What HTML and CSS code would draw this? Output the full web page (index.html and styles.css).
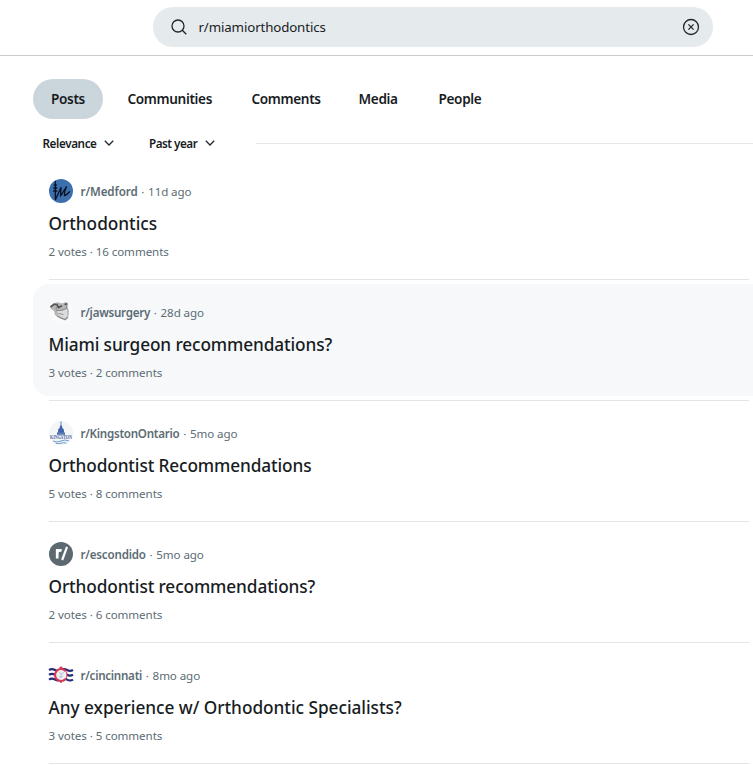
FILE: index.html
```html
<!DOCTYPE html>
<html lang="en">
<head>
<meta charset="utf-8">
<title>Search results</title>
<link rel="stylesheet" href="styles.css">
</head>
<body>
<header class="topbar">
  <div class="search">
    <svg class="search-icon" width="16" height="16" viewBox="0 0 16 16"><circle cx="7" cy="7" r="6"/><path d="M11.3 11.3 15.3 15.3"/></svg>
    <span class="query">r/miamiorthodontics</span>
    <svg class="clear-icon" width="18" height="18" viewBox="0 0 18 18"><circle cx="9" cy="9" r="7.5"/><path d="M6.4 6.4l5.2 5.2M11.6 6.4l-5.2 5.2"/></svg>
  </div>
</header>
<main>
  <nav class="tabs">
    <a class="tab active"><span class="w-posts">Posts</span></a>
    <a class="tab"><span class="w-communities">Communities</span></a>
    <a class="tab"><span class="w-comments">Comments</span></a>
    <a class="tab"><span class="w-media">Media</span></a>
    <a class="tab"><span class="w-people">People</span></a>
  </nav>
  <div class="filters">
    <button class="filter relevance"><span>Relevance</span><svg width="10" height="6" viewBox="0 0 10 6"><path d="M.8 .8 5 5 9.2 .8"/></svg></button>
    <button class="filter period"><span>Past year</span><svg width="10" height="6" viewBox="0 0 10 6"><path d="M.8 .8 5 5 9.2 .8"/></svg></button>
    <div class="rule"></div>
  </div>
  <section class="results">
    <article class="post">
      <div class="meta">
        <svg class="avatar" viewBox="0 0 24 24"><circle cx="12" cy="12" r="12" fill="#3b6fae"/><g fill="none" stroke="#0b1020" stroke-linecap="round" stroke-linejoin="round"><path d="M6.3 2.5v17.5M5.3 6h2M4.8 9h3M4.6 12h3.2" stroke-width="1.3"/><path d="M6.5 20.5 12 8.5 11.6 17 17.4 7.8Q15 13 15.4 16.5 17 16.5 20.5 12.8" stroke-width="1.3"/></g></svg>
        <span class="sub s1">r/Medford</span><span class="dot">·</span><span class="age">11d ago</span>
      </div>
      <h2 class="t1">Orthodontics</h2>
      <p class="stats">2 votes · 16 comments</p>
    </article>
    <hr>
    <article class="post hovered">
      <div class="meta">
        <svg class="avatar" viewBox="0 0 24 24"><circle cx="12" cy="12" r="12" fill="#fafafa"/><path d="M1 6.5 5 3 9 2.2 13 3.5 17 2 19 3.5 18.5 7 20 11 19.3 17.5 16.5 20.5 11 18.5 6 15 5 11 2 9Z" fill="#b5b5b5"/><path d="M8 10.5 14 10.5 18 8.5 18.5 16 15.5 18.5 9.5 15.5Z" fill="#dcdcdc"/><path d="M1.5 7 5 4.3 8 4.5 9.5 7.5 13 5.8M15.5 4.5 18.3 3.8" fill="none" stroke="#555" stroke-width="1.7"/><path d="M7.5 6.5 7 9.5M17.5 5 17.8 8.5 12 10.5 7 10.5M8 16 16 19.7 19 17.5M9.5 13.5 14.5 14.5" fill="none" stroke="#858585" stroke-width=".9"/></svg>
        <span class="sub s2">r/jawsurgery</span><span class="dot">·</span><span class="age">28d ago</span>
      </div>
      <h2 class="t2">Miami surgeon recommendations?</h2>
      <p class="stats">3 votes · 2 comments</p>
    </article>
    <hr>
    <article class="post">
      <div class="meta">
        <svg class="avatar" viewBox="0 0 24 24"><circle cx="12" cy="12" r="12" fill="#f4f5f7"/><path d="M11.6 .5h.8v3.8l.8 1v1.5q1.8 1 1.8 3v1.7h1v2.2H8v-2.2h1V9.8q0-2 1.8-3V5.3l.8-1Z" fill="#3f65aa"/><path d="M10 11.5v2M12 11.5v2M14 11.5v2" stroke="#a9bbdc" stroke-width=".6"/><text class="crest" x="1" y="18.4" textLength="22" lengthAdjust="spacingAndGlyphs">KINGSTON</text><path d="M4 20q4 2 8 0t8 0M6.5 22.2q2.8 1 5.5 0t5.5 0" fill="none" stroke="#6b9bcf"/></svg>
        <span class="sub s3">r/KingstonOntario</span><span class="dot">·</span><span class="age">5mo ago</span>
      </div>
      <h2 class="t3">Orthodontist Recommendations</h2>
      <p class="stats">5 votes · 8 comments</p>
    </article>
    <hr>
    <article class="post">
      <div class="meta">
        <svg class="avatar" viewBox="0 0 24 24"><circle cx="12" cy="12" r="12" fill="#5c6970"/><path d="M8.2 16.5V7M8.2 10.8q.3-2.8 4.4-2.4" fill="none" stroke="#fff" stroke-width="2.7"/><path d="M13.2 18 18 4.8" stroke="#fff" stroke-width="2.2"/></svg>
        <span class="sub s4">r/escondido</span><span class="dot">·</span><span class="age">5mo ago</span>
      </div>
      <h2 class="t4">Orthodontist recommendations?</h2>
      <p class="stats">2 votes · 6 comments</p>
    </article>
    <hr>
    <article class="post">
      <div class="meta">
        <svg class="avatar" viewBox="0 0 24 24"><path d="M0 7q3-1.8 6 0t6 0 6 0 6 0M0 11.8q3-1.8 6 0t6 0 6 0 6 0M0 16.6q3-1.8 6 0t6 0 6 0 6 0" fill="none" stroke="#282c78" stroke-width="2.2"/><circle cx="12" cy="12" r="6" fill="#eef0f6"/><path d="M16.5 8A6 6 0 1 0 16.5 16" fill="none" stroke="#d83a50" stroke-width="2.2"/><path d="M16.5 8a6 6 0 0 1 0 8" fill="none" stroke="#d83a50" stroke-width="1"/><path d="M12 3.6v2.5M10.3 5h3.4M11 18.9h2" stroke="#d83a50" stroke-width="1.6"/><path d="M10 9.2 12 11l3-1.5M12 11v4M9.8 13.5l2.2 1 2-2" fill="none" stroke="#a9b2ca" stroke-width=".8"/></svg>
        <span class="sub s5">r/cincinnati</span><span class="dot">·</span><span class="age">8mo ago</span>
      </div>
      <h2 class="t5">Any experience w/ Orthodontic Specialists?</h2>
      <p class="stats">3 votes · 5 comments</p>
    </article>
    <hr>
  </section>
</main>
</body>
</html>
```
FILE: styles.css
```css
* { box-sizing: border-box; }
body {
  margin: 0;
  background: #fff;
  color: #181c1f;
  font-family: "Noto Sans", "Open Sans", sans-serif;
  overflow: hidden;
}
svg { flex: none; }
.topbar {
  height: 56px;
  padding: 7px 40px 0 153px;
  border-bottom: 1px solid #c9cbcc;
}
.search {
  display: flex;
  align-items: center;
  height: 40px;
  padding: 0 13px 0 18px;
  border-radius: 20px;
  background: #e5eaed;
}
.search svg, .filter svg {
  fill: none;
  stroke: #22272a;
  stroke-width: 1.3;
}
.query {
  flex: 1;
  margin-left: 11.5px;
  font-size: 13.3px;
  letter-spacing: -.13px;
}
.tabs {
  display: flex;
  margin: 23px 0 0 33px;
}
.tab {
  height: 40px;
  padding: 0 18px;
  border-radius: 20px;
  font-size: 13.6px;
  font-weight: 600;
  line-height: 40px;
  letter-spacing: -.35px;
  white-space: nowrap;
}
.tab span { display: block; }
.tab + .tab { margin-left: 4px; }
.active { background: #cbd6dc; }
.w-posts { width: 34px; }
.w-communities { width: 84px; margin-left: 2.5px; }
.w-comments { width: 67px; }
.w-media { width: 40px; }
.w-people { width: 44px; }
.filters {
  display: flex;
  align-items: center;
  height: 32px;
  margin-top: 8px;
  padding-left: 42.5px;
}
.filter {
  display: flex;
  align-items: center;
  gap: 7.5px;
  padding: 0;
  border: 0;
  background: none;
  color: inherit;
  font: 600 11.7px "Noto Sans", sans-serif;
  letter-spacing: -.4px;
  white-space: nowrap;
}
.relevance { width: 106.5px; }
.period { width: 107px; }
.period span { letter-spacing: -.5px; }
.rule {
  flex: 1;
  height: 1px;
  background: #e5e7e8;
}
.results { padding: 4px 0 0 33px; }
.post {
  height: 112px;
  padding: 16px;
  border-radius: 16px 0 0 16px;
}
.hovered { background: #f6f8fa; }
hr {
  height: 1px;
  margin: 4px 4px 4px 16px;
  border: 0;
  background: #e2e4e5;
}
.meta {
  display: flex;
  align-items: center;
  height: 24px;
  color: #5c6c74;
  font-size: 11.6px;
  letter-spacing: -.1px;
  white-space: nowrap;
}
.avatar {
  width: 24px;
  height: 24px;
  margin-right: 7.5px;
  overflow: visible;
}
.sub { font-weight: 600; letter-spacing: -.27px; }
.s1 { letter-spacing: -.1px; }
.s4 { letter-spacing: -.2px; }
.dot { width: 10.5px; text-align: center; }
.crest {
  fill: #4c68a5;
  font: 700 5.5px "Liberation Serif", serif;
  letter-spacing: 0;
}
h2 {
  margin: 8px 0 0 -.5px;
  font-size: 17.25px;
  font-weight: 500;
  line-height: 26px;
  letter-spacing: -.12px;
  white-space: nowrap;
}
.t1 { letter-spacing: -.03px; }
.t5 { letter-spacing: -.03px; }
.stats {
  margin: 7px 0 0 -.5px;
  color: #5c6c74;
  font-size: 11.6px;
  line-height: 16px;
  letter-spacing: -.08px;
}
```
